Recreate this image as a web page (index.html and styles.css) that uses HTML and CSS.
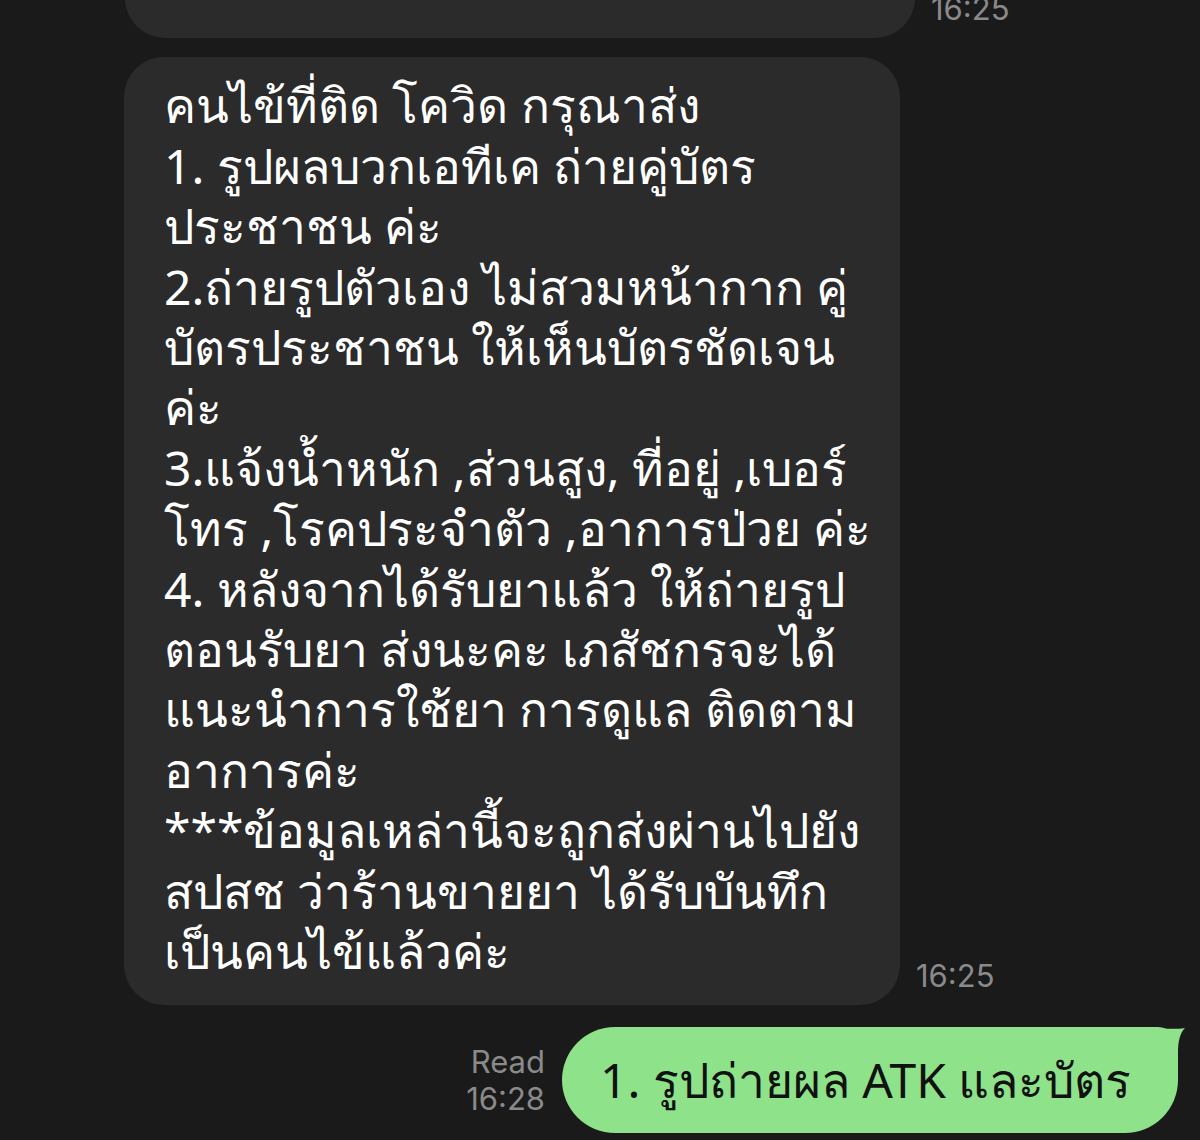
FILE: index.html
```html
<!DOCTYPE html>
<html lang="th">
  <head>
    <meta charset="UTF-8" />
    <meta name="viewport" content="width=device-width, initial-scale=1.0" />
    <title>Chat</title>
    <link rel="stylesheet" href="styles.css">
  </head>
  <body>
    <div class="chat">
      <div class="row incoming first">
        <div class="bubble bubble-top">ยังรอยืนยันค่ะ</div>
        <span class="time">16:25</span>
      </div>

      <div class="row incoming">
        <div class="bubble bubble-main">
          คนไข้ที่ติด โควิด กรุณาส่ง<br>
          1. รูปผลบวกเอทีเค ถ่ายคู่บัตร<br>
          ประชาชน ค่ะ<br>
          2.ถ่ายรูปตัวเอง ไม่สวมหน้ากาก คู่<br>
          บัตรประชาชน ให้เห็นบัตรชัดเจน<br>
          ค่ะ<br>
          3.แจ้งน้ำหนัก ,ส่วนสูง, ที่อยู่ ,เบอร์<br>
          โทร ,โรคประจำตัว ,อาการป่วย ค่ะ<br>
          4. หลังจากได้รับยาแล้ว ให้ถ่ายรูป<br>
          ตอนรับยา ส่งนะคะ เภสัชกรจะได้<br>
          แนะนำการใช้ยา การดูแล ติดตาม<br>
          อาการค่ะ<br>
          ***ข้อมูลเหล่านี้จะถูกส่งผ่านไปยัง<br>
          สปสช ว่าร้านขายยา ได้รับบันทึก<br>
          เป็นคนไข้แล้วค่ะ
        </div>
        <span class="time">16:25</span>
      </div>

      <div class="row outgoing">
        <div class="status">
          <span>Read</span>
          <span>16:28</span>
        </div>
        <div class="bubble bubble-mine">
          1. รูปถ่ายผล ATK และบัตร
          <svg class="tail" width="50" height="40" viewBox="0 0 50 40">
            <path d="M0 0 C18 1 36 3 49 1 C44 6 42 14 42 26 L42 40 L0 40 Z" fill="#8de28a" />
          </svg>
        </div>
      </div>
    </div>
  </body>
</html>
```

FILE: styles.css
```css
/* Dark chat screen */
body {
  margin: 0;
  padding: 0;
  background-color: #1a1a1a;
  font-family: "Noto Sans", "DejaVu Sans", sans-serif;
  overflow: hidden;
}
.chat {
  display: flex;
  flex-direction: column;
}
.row {
  display: flex;
  align-items: flex-end;
}
.incoming {
  padding-left: 124px;
  gap: 16px;
}
.first {
  margin-top: -66px;
}
.bubble {
  box-sizing: border-box;
  font-size: 48px;
  line-height: 60.4px;
  white-space: nowrap;
}
.bubble-top,
.bubble-main {
  background: #2b2b2b;
  color: #fff;
  border-radius: 40px;
  padding: 18px 20px 26px 40px;
}
.bubble-top {
  width: 790px;
  margin-left: 1px;
}
.bubble-main {
  width: 776px;
  margin-top: 19px;
  height: 948px;
}
.time {
  font-family: Inter, "Liberation Sans", sans-serif;
  font-size: 31px;
  color: #8a8a8a;
  margin-bottom: 11px;
}
.outgoing {
  justify-content: flex-end;
  padding-right: 22px;
  margin-top: 22px;
  gap: 17px;
}
.status {
  display: flex;
  flex-direction: column;
  align-items: flex-end;
  font-family: Inter, "Liberation Sans", sans-serif;
  font-size: 31px;
  line-height: 37px;
  color: #8a8a8a;
  margin-bottom: 16px;
}
.bubble-mine {
  position: relative;
  width: 616px;
  height: 106px;
  background: #8de28a;
  color: #111;
  border-radius: 53px 20px 53px 53px;
  padding: 0 38px;
  display: flex;
  align-items: center;
}
.tail {
  position: absolute;
  top: 0;
  right: -8px;
}
```
